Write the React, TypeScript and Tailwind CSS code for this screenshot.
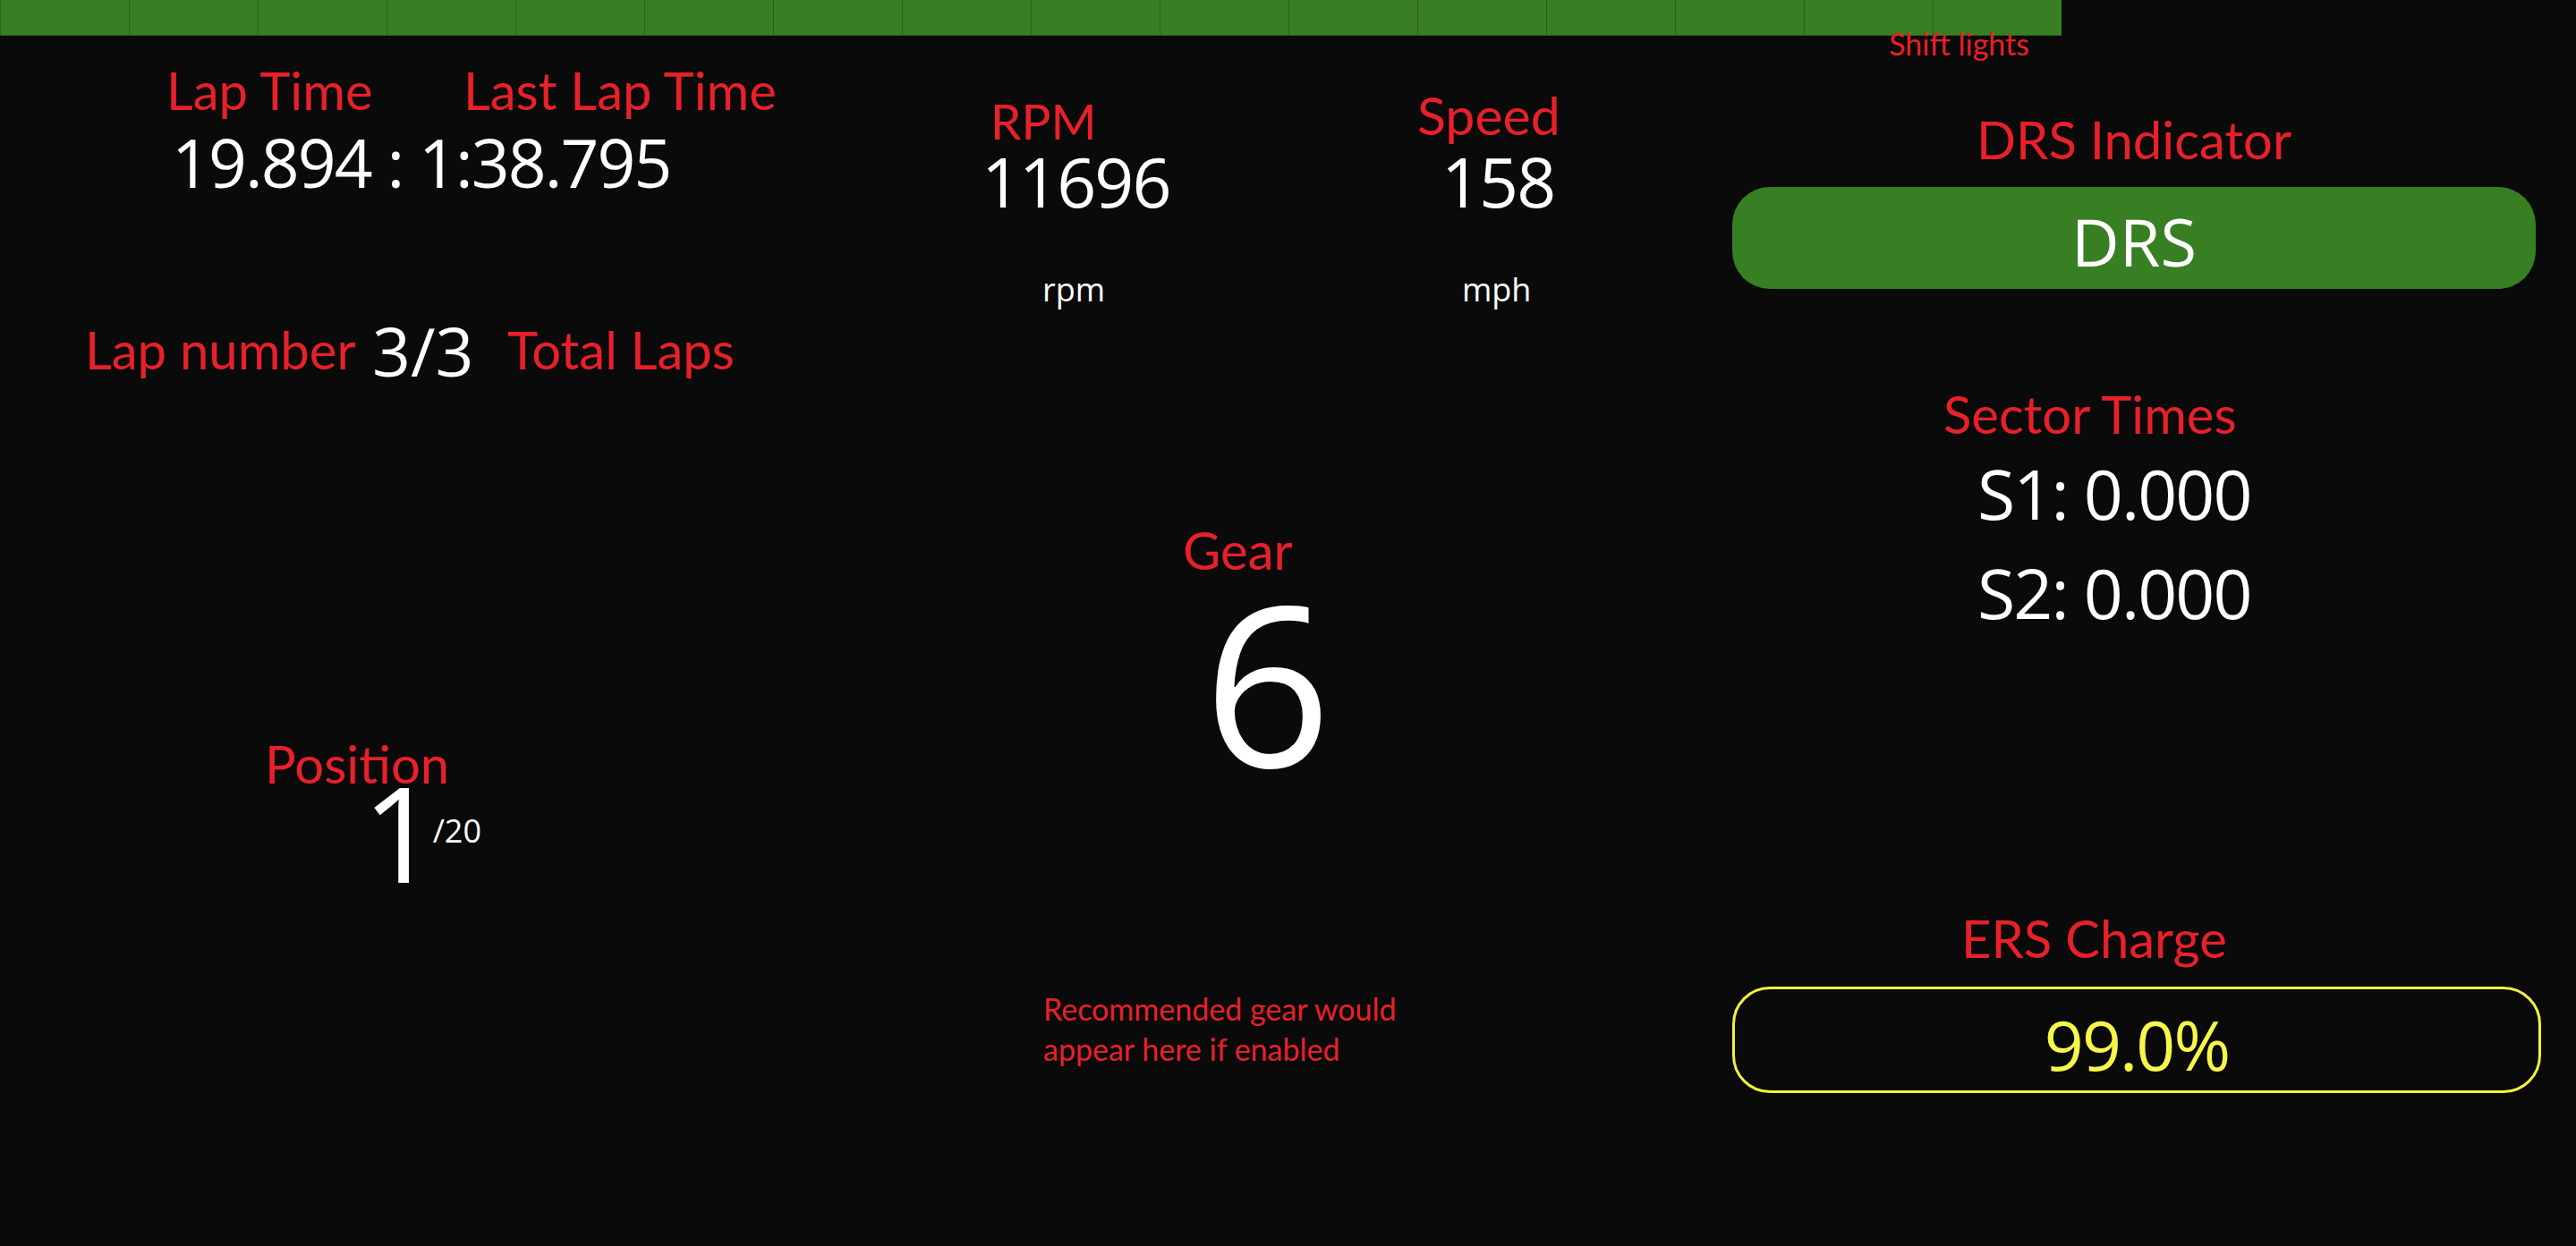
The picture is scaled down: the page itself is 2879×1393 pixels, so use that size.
import React from 'react'

const segments = Array.from({ length: 16 }, (_, i) => i)

const Label = ({ children, className = '' }: { children: React.ReactNode; className?: string }) => (
  <span className={`font-['Lato',sans-serif] leading-none text-[#e8202a] whitespace-nowrap ${className}`}>
    {children}
  </span>
)

const Value = ({ children, className = '' }: { children: React.ReactNode; className?: string }) => (
  <span className={`font-['Open_Sans',sans-serif] leading-none text-white whitespace-nowrap ${className}`}>
    {children}
  </span>
)

const ShiftLights = () => (
  <header className="flex flex-col shrink-0">
    <div className="flex w-[2304px] h-[40px]">
      {segments.map((i) => (
        <div key={i} className="w-[144px] h-full bg-[#387e22] border-l border-b border-[#2c6119]" />
      ))}
    </div>
    <div className="relative flex justify-end w-[2304px] pr-[36px] -mt-[8px]">
      <Label className="text-[34px]">Shift lights</Label>
    </div>
  </header>
)

const LapColumn = () => (
  <section className="flex flex-col">
    <div className="flex mt-[6px] pl-[186px]">
      <Label className="text-[58px] w-[332px] shrink-0">Lap Time</Label>
      <Label className="text-[58px]">Last Lap Time</Label>
    </div>
    <Value className="mt-[14px] pl-[192px] text-[75px] tracking-tight">19.894 : 1:38.795</Value>

    <div className="flex items-start mt-[136px] pl-[95px]">
      <Label className="text-[58px] mt-[7px] w-[321px] shrink-0">Lap number</Label>
      <Value className="text-[75px] w-[151px] shrink-0">3/3</Value>
      <Label className="text-[58px] mt-[7px]">Total Laps</Label>
    </div>

    <Label className="text-[58px] mt-[395px] pl-[296px]">Position</Label>
    <div className="flex items-start -mt-[27px] pl-[405px]">
      <Value className="text-[148px]">1</Value>
      <Value className="text-[36px] mt-[55px] -ml-[6px]">/20</Value>
    </div>
  </section>
)

const EngineColumn = () => (
  <section className="flex flex-col">
    <div className="flex items-start mt-[33px] pl-[147px]">
      <Label className="text-[55px] mt-[9px] w-[477px] shrink-0">RPM</Label>
      <Label className="text-[59px]">Speed</Label>
    </div>
    <div className="flex mt-[1px] pl-[137px]">
      <Value className="text-[77px] tracking-tight w-[514px] shrink-0">11696</Value>
      <Value className="text-[77px] tracking-tight">158</Value>
    </div>
    <div className="flex mt-[65px] pl-[205px]">
      <Value className="text-[36px] w-[469px] shrink-0">rpm</Value>
      <Value className="text-[36px]">mph</Value>
    </div>

    <Label className="text-[58px] mt-[244px] pl-[362px]">Gear</Label>
    <Value className="text-[250px] -mt-[8px] pl-[385px]">6</Value>

    <p className="mt-[219px] pl-[206px] font-['Lato',sans-serif] text-[34px] leading-[45px] text-[#e8202a]">
      Recommended gear would
      <br />
      appear here if enabled
    </p>
  </section>
)

const StatusColumn = () => (
  <section className="flex flex-col pl-[16px]">
    <Label className="text-[58px] mt-[61px] w-[898px] text-center">DRS Indicator</Label>
    <div className="mt-[24px] w-[898px] h-[114px] rounded-[42px] bg-[#387e22] flex items-center justify-center">
      <Value className="text-[74px] pt-[7px]">DRS</Value>
    </div>

    <Label className="text-[58px] mt-[111px] pl-[236px]">Sector Times</Label>
    <Value className="text-[77px] tracking-tight mt-[21px] pl-[274px]">S1: 0.000</Value>
    <Value className="text-[77px] tracking-tight mt-[34px] pl-[274px]">S2: 0.000</Value>

    <Label className="text-[58px] mt-[319px] pl-[256px]">ERS Charge</Label>
    <div className="mt-[25px] w-[904px] h-[119px] rounded-[42px] border-[3px] border-[#f2f23c] flex items-center justify-center">
      <span className="font-['Open_Sans',sans-serif] leading-none text-[77px] tracking-tight text-[#f7f74a] pt-[10px]">
        99.0%
      </span>
    </div>
  </section>
)

export default function App() {
  return (
    <div className="w-screen h-screen overflow-hidden bg-[#0a0a0a] flex flex-col">
      <ShiftLights />
      <main className="flex-1 grid grid-cols-[960px_960px_1fr]">
        <LapColumn />
        <EngineColumn />
        <StatusColumn />
      </main>
    </div>
  )
}
